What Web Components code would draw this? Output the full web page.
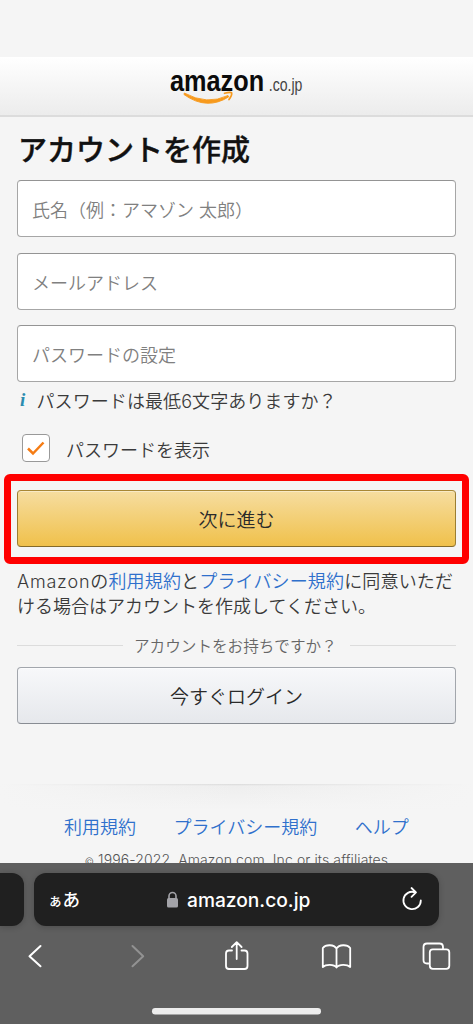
<!DOCTYPE html>
<html lang="ja">
<head>
<meta charset="utf-8">
<meta name="viewport" content="width=device-width, initial-scale=1">
<title>アカウントを作成</title>
<style>
html,body{margin:0;height:100%;overflow:hidden;background:#f5f5f5}
body{font-family:"Inter","Noto Sans CJK JP",sans-serif;color:#222}
</style>
</head>
<body>
<signup-page></signup-page>
<script>
function define(name, html) {
  const t = document.createElement('template');
  t.innerHTML = html.trim();
  customElements.define(name, class extends HTMLElement {
    constructor() {
      super();
      this.attachShadow({mode: 'open'}).appendChild(t.content.cloneNode(true));
    }
  });
}

define('site-header', `
<style>
:host{display:flex;box-sizing:border-box;height:60px;margin-top:57px;justify-content:center;background:linear-gradient(#fff,#ececec);border-bottom:2px solid #dcdcdc}
svg{display:block}
</style>
<svg width="140" height="58" viewBox="167 57 140 58">
  <text transform="translate(170 91) scale(.843 1)" font-family="Liberation Sans" font-weight="700" font-size="30" fill="#0b0b0b">amazon</text>
  <text transform="translate(268.800 91) scale(.805 1)" font-family="Liberation Sans" font-size="17.500" fill="#444">.co.jp</text>
  <path d="M184.300 93Q207 105.500 228 95.500L228.800 96.800Q207 110.800 184 94.600Z" fill="#f79a1d" stroke="#f79a1d" stroke-width=".9" stroke-linejoin="round"/>
  <path d="M224.500 93.300Q230.500 91.700 231.600 92.800Q232.300 95 229 99.600" fill="none" stroke="#f79a1d" stroke-width="1.700" stroke-linecap="round"/>
</svg>`);

define('form-field', `
<style>
:host{display:flex;align-items:center;box-sizing:border-box;height:57px;padding:1px 0 0 14px;border:1px solid #a6a6a6;border-top-color:#949494;border-radius:4px;background:#fff;color:#808080;font-size:18px;font-weight:350;white-space:pre}
</style><slot></slot>`);

define('info-hint', `
<style>
:host{display:flex;align-items:center;height:26px;font-size:18px;font-weight:350;color:#3a3a3a;letter-spacing:.08px;white-space:nowrap}
i{font:italic bold 19px "Liberation Serif",serif;color:#2b8cb0;width:16.500px;padding-left:2px;box-sizing:content-box}
</style><i>i</i><span><slot></slot></span>`);

define('check-option', `
<style>
:host{display:flex;align-items:center;height:28px;font-size:18px;font-weight:350;color:#3a3a3a;white-space:nowrap;gap:16px}
svg{display:block;flex:none}
span{padding-top:2px}
</style>
<svg width="28" height="28"><rect x=".5" y=".5" width="27" height="27" rx="3.500" fill="#fff" stroke="#999"/><path d="M6 14.500l5 5L21.500 8.500" fill="none" stroke="#f57c14" stroke-width="2.500"/></svg>
<span><slot></slot></span>`);

define('wide-button', `
<style>
:host{display:flex;align-items:center;justify-content:center;box-sizing:border-box;height:57px;border:1px solid #a2a6ac;border-bottom-color:#888c93;border-radius:4px;background:linear-gradient(#f7f8fa,#e6e8ec);box-shadow:inset 0 1px 0 #ffffff99;font-size:19px;font-weight:350;color:#2a2a2a}
:host([primary]){border-color:#a88734 #9c7e31 #846a29;background:linear-gradient(#f6dda0,#f0c14b);box-shadow:inset 0 1px 0 #ffffff66}
</style><slot></slot>`);

define('focus-frame', `
<style>
:host{display:block;box-sizing:border-box;margin:0 4px;height:90px;border:7px solid red;border-radius:6px;padding:9px 6px;background:#f5f5f5}
</style><slot></slot>`);

define('text-link', `
<style>:host{display:inline;color:#2f70cc}</style><slot></slot>`);

define('or-divider', `
<style>
:host{display:flex;align-items:center;height:24px;font-size:15.600px;font-weight:350;color:#666;white-space:nowrap;gap:11px}
:host::before,:host::after{content:"";flex:1;height:1px;background:#dcdcdc}
span{flex:none;width:205px}
</style><span><slot></slot></span>`);

define('page-footer', `
<style>
:host{display:block;height:79px;position:relative}
.rule{height:26px;background:linear-gradient(90deg,#f5f5f5,#f5f5f500 50%,#f5f5f5),linear-gradient(#d9d9d9,#eee 2px,#f5f5f5)}
nav{display:flex;font-size:18px;font-weight:350;line-height:28px;padding:4px 0 0 64px;gap:37.500px;white-space:nowrap}
p{margin:6px 0 0;text-align:center;font-size:14px;font-weight:300;line-height:24px;color:#555;letter-spacing:.1px;white-space:nowrap}
small{font-size:10px}
</style>
<div class="rule"></div>
<nav><text-link>利用規約</text-link><text-link>プライバシー規約</text-link><text-link>ヘルプ</text-link></nav>
<p><small>©</small> 1996-2022, Amazon.com, Inc.or its affiliates</p>`);

define('address-bar', `
<style>
:host{display:grid;grid-template-columns:24px 405px;column-gap:10px;height:53px}
.prev{background:#202020;border-radius:0 12px 12px 0;box-shadow:0 1px 6px #0003}
.bar{display:grid;grid-template-columns:132px 1fr 38px;align-items:center;background:#202020;border-radius:12px;box-shadow:0 1px 6px #0003;color:#fff}
.aa{font-size:17.500px;font-weight:500;padding:2px 0 0 14px;white-space:nowrap;line-height:24px}
.aa small{font-size:14.500px}
.host{display:flex;align-items:center;gap:8px;font:450 19.200px/28px "Inter",sans-serif}
svg{display:block}
</style>
<div class="prev"></div>
<div class="bar">
  <div class="aa"><small>ぁ</small>あ</div>
  <div class="host"><svg width="13" height="17"><path d="M3 8V5a3.500 3.500 0 0 1 7 0v3" fill="none" stroke="#a3a3a8" stroke-width="1.600"/><rect x="1" y="7" width="11" height="9.500" rx="1.500" fill="#a3a3a8"/></svg><span><slot></slot></span></div>
  <svg width="24" height="28" viewBox="401 885 24 28" fill="none" stroke="#fff" stroke-width="1.800" stroke-linecap="round" stroke-linejoin="round"><path d="M420.800 899.500A8.700 8.700 0 1 1 415 891.300M411.500 887l4.500 4.300-4.500 4.500"/></svg>
</div>`);

define('browser-tools', `
<style>
:host{display:block;height:108px}
svg{display:block}
</style>
<svg width="473" height="108" viewBox="0 916 473 108" fill="none" stroke="#fff" stroke-width="2" stroke-linecap="round" stroke-linejoin="round">
  <path d="M40.500 946L29.500 956.200 40.500 966.300"/>
  <path d="M132.500 946L143.200 956.200 132.500 966.300" stroke="#929292"/>
  <path d="M232 950.500H229q-3 0-3 3V966q0 3 3 3h15.500q3 0 3-3v-12.500q0-3-3-3H241.500M236.700 959V942.500M231.800 947l4.900-4.900 4.900 4.900" stroke-width="1.800"/>
  <path d="M336.500 948.500v18.500M336.500 948.500C334 944.500 326 944 322.800 948v19C326 964 334 964 336.500 967.500C339 964 347 964 350.200 967V948C347 944 339 944.500 336.500 948.500Z" stroke-width="1.800"/>
  <path d="M428.500 963.500H427q-3.500 0-3.500-3.500V947q0-3.500 3.500-3.500h12.500q3.500 0 3.500 3.500v1.500" stroke-width="1.800"/>
  <rect x="429.800" y="949.300" width="19.500" height="19.500" rx="3" stroke-width="1.800"/>
  <rect x="152" y="1008" width="169" height="6.500" rx="3.200" fill="#ededed" stroke="none"/>
</svg>`);

define('browser-chrome', `
<style>
:host{display:flex;flex-direction:column;height:161px;box-sizing:border-box;padding-top:10px;background:#5f5f5f}
browser-tools{margin-top:-10px}
</style>
<address-bar>amazon.co.jp</address-bar>
<browser-tools></browser-tools>`);

define('signup-page', `
<style>
:host{display:flex;flex-direction:column;width:473px;height:1024px;overflow:hidden;background:#f5f5f5}
main{display:flex;flex-direction:column;height:746px;overflow:hidden}
h1{margin:14px 0 0 18px;font-size:29px;line-height:40px;font-weight:500;-webkit-text-stroke:.4px #111;color:#111;white-space:nowrap}
.fields{display:grid;gap:15.500px;margin:9px 17px 0}
info-hint{margin:5px 17px 0 18px}
check-option{margin:21px 0 0 22px}
focus-frame{margin-top:12px}
.terms{margin:5px 0 0 17px;font-size:18px;line-height:25px;font-weight:350;color:#3a3a3a;white-space:nowrap}
.lead{letter-spacing:.16px}
.latin{letter-spacing:.8px}
or-divider{margin:14px 17px 0}
wide-button.login{margin:10px 17px 0}
page-footer{margin-top:60px}
</style>
<site-header></site-header>
<main>
  <h1>アカウントを作成</h1>
  <div class="fields"><form-field>氏名（例：アマゾン 太郎）</form-field><form-field>メールアドレス</form-field><form-field>パスワードの設定</form-field></div>
  <info-hint>パスワードは最低6文字ありますか？</info-hint>
  <check-option>パスワードを表示</check-option>
  <focus-frame><wide-button primary>次に進む</wide-button></focus-frame>
  <div class="terms"><span class="lead"><span class="latin">Amazon</span>の<text-link>利用規約</text-link>と<text-link>プライバシー規約</text-link>に同意いただ</span><br>ける場合はアカウントを作成してください。</div>
  <or-divider>アカウントをお持ちですか？</or-divider>
  <wide-button class="login">今すぐログイン</wide-button>
  <page-footer></page-footer>
</main>
<browser-chrome></browser-chrome>`);
</script>
</body>
</html>
